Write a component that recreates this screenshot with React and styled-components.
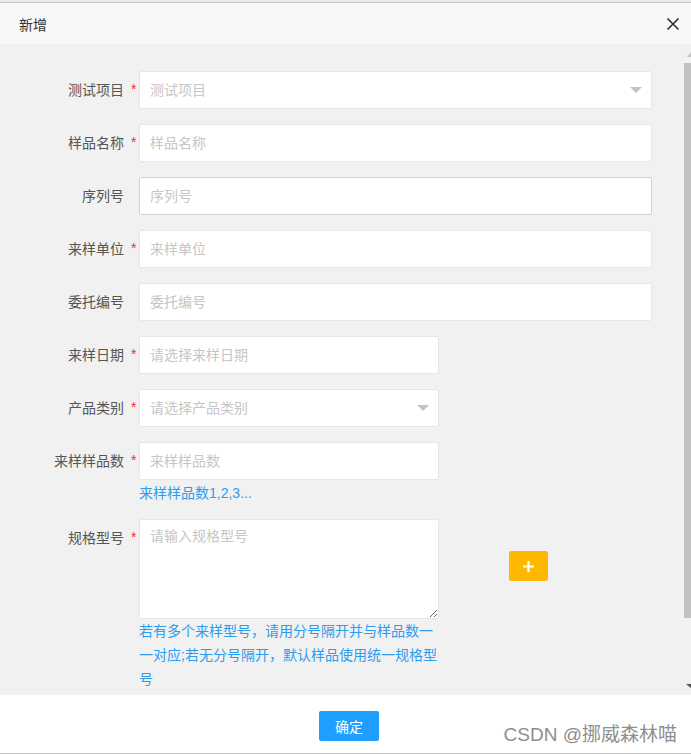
import React from "react";
import styled, { createGlobalStyle } from "styled-components";

const Global = createGlobalStyle`
  html, body { margin: 0; padding: 0; background: #ececec; }
  body { font-family: "Liberation Sans", "Noto Sans CJK SC", sans-serif; }
  * { box-sizing: border-box; }
`;

const Dialog = styled.div`
  width: 691px;
  height: 752px;
  margin-top: 2px;
  border-top: 1px solid #c6c6c6;
  border-bottom: 1px solid #c2c2c2;
  background: #fff;
  display: flex;
  flex-direction: column;
  overflow: hidden;
`;

const Header = styled.div`
  height: 42px;
  flex-shrink: 0;
  background: #f8f8f8;
  border-bottom: 1px solid #eeeeee;
  display: flex;
  align-items: center;
  justify-content: space-between;
  padding: 0 11px 0 19px;
`;

const Title = styled.div`
  font-size: 14px;
  color: #333;
`;

const CloseBtn = styled.button`
  border: none;
  background: none;
  padding: 0;
  width: 14px;
  height: 14px;
  display: flex;
  cursor: pointer;
`;

const Body = styled.div`
  height: 650px;
  flex-shrink: 0;
  background: #f1f1f1;
  display: flex;
  overflow: hidden;
`;

const Form = styled.form`
  flex: 1;
  padding-top: 26px;
  display: flex;
  flex-direction: column;
`;

const ScrollTrack = styled.div`
  width: 7px;
  flex-shrink: 0;
  display: flex;
  flex-direction: column;
  align-items: flex-end;
`;

const ArrowUp = styled.div`
  margin-top: 7px;
  width: 0;
  height: 0;
  border-left: 4px solid transparent;
  border-bottom: 5px solid #c4c4c4;
`;

const Thumb = styled.div`
  margin-top: 6px;
  width: 7px;
  height: 555px;
  background: #c1c1c1;
`;

const ArrowDown = styled.div`
  margin-top: 66px;
  width: 0;
  height: 0;
  border-left: 5px solid transparent;
  border-top: 4px solid #505050;
`;

const Row = styled.div`
  display: flex;
  align-items: flex-start;
  margin-bottom: ${(p) => (p.$mb != null ? p.$mb : 15)}px;
`;

const Label = styled.label`
  width: 124px;
  flex-shrink: 0;
  text-align: right;
  padding: 9px 0;
  font-size: 14px;
  line-height: 20px;
  color: #555;
  white-space: nowrap;
`;

const Star = styled.span`
  width: 15px;
  flex-shrink: 0;
  padding: 8px 0 0 7px;
  font-size: 14px;
  line-height: 20px;
  color: #ff2a2a;
`;

const Field = styled.div`
  display: flex;
  flex-direction: column;
  position: relative;
`;

const Input = styled.input`
  width: ${(p) => (p.$wide ? 513 : 300)}px;
  height: 38px;
  border: 1px solid ${(p) => (p.$strong ? "#d2d2d2" : "#e6e6e6")};
  border-radius: 2px;
  background: #fff;
  padding: 0 10px;
  font-size: 14px;
  font-family: inherit;
  color: #333;
  outline: none;
  &::placeholder { color: #c6c6c6; }
`;

const Caret = styled.span`
  position: absolute;
  right: 10px;
  top: 16px;
  width: 0;
  height: 0;
  border-left: 6px solid transparent;
  border-right: 6px solid transparent;
  border-top: 6px solid #c2c2c2;
  pointer-events: none;
`;

const Help = styled.div`
  width: 300px;
  font-size: 14px;
  line-height: ${(p) => p.$lh || 24}px;
  margin-top: ${(p) => p.$mt || 0}px;
  color: #2d9bf0;
`;

const TextArea = styled.textarea`
  width: 300px;
  height: 100px;
  border: 1px solid #e6e6e6;
  border-radius: 2px;
  background: #fff;
  padding: 6px 10px;
  font-size: 14px;
  line-height: 20px;
  font-family: inherit;
  resize: vertical;
  outline: none;
  display: block;
  &::placeholder { color: #c6c6c6; }
`;

const AddButton = styled.button`
  margin: 32px 0 0 70px;
  width: 39px;
  height: 30px;
  border: none;
  border-radius: 2px;
  background: #ffb800;
  display: flex;
  align-items: center;
  justify-content: center;
  cursor: pointer;
  padding: 0;
`;

const Footer = styled.div`
  height: 57px;
  flex-shrink: 0;
  background: #fff;
  position: relative;
  display: flex;
  justify-content: center;
  padding: 16px 0 0 7px;
`;

const PrimaryButton = styled.button`
  width: 60px;
  height: 30px;
  border: none;
  border-radius: 2px;
  background: #1e9fff;
  color: #fff;
  font-size: 14px;
  font-family: inherit;
  cursor: pointer;
  padding: 0;
`;

const Watermark = styled.div`
  position: absolute;
  right: 14px;
  top: 28px;
  font-size: 19px;
  line-height: 24px;
  color: #8e8e8e;
  text-shadow: 0 0 1px rgba(255, 255, 255, 0.8);
  white-space: nowrap;
  pointer-events: none;
`;

const fields = [
  { label: "测试项目", req: true, ph: "测试项目", wide: true, select: true },
  { label: "样品名称", req: true, ph: "样品名称", wide: true },
  { label: "序列号", req: false, ph: "序列号", wide: true, strong: true },
  { label: "来样单位", req: true, ph: "来样单位", wide: true },
  { label: "委托编号", req: false, ph: "委托编号", wide: true },
  { label: "来样日期", req: true, ph: "请选择来样日期" },
  { label: "产品类别", req: true, ph: "请选择产品类别", select: true },
];

export default function App() {
  return (
    <>
      <Global />
      <Dialog>
        <Header>
          <Title>新增</Title>
          <CloseBtn aria-label="关闭">
            <svg width="14" height="14" viewBox="0 0 14 14">
              <path d="M1.5 1.5 L12.5 12.5 M12.5 1.5 L1.5 12.5" stroke="#2b2b36" strokeWidth="1.6" fill="none" />
            </svg>
          </CloseBtn>
        </Header>
        <Body>
          <Form onSubmit={(e) => e.preventDefault()}>
            {fields.map((f) => (
              <Row key={f.label}>
                <Label>{f.label}</Label>
                <Star>{f.req ? "*" : ""}</Star>
                <Field>
                  <Input $wide={f.wide} $strong={f.strong} placeholder={f.ph} readOnly={f.select} />
                  {f.select && <Caret />}
                </Field>
              </Row>
            ))}
            <Row $mb={15}>
              <Label>来样样品数</Label>
              <Star>*</Star>
              <Field>
                <Input placeholder="来样样品数" />
                <Help $lh={22} $mt={2}>来样样品数1,2,3...</Help>
              </Field>
            </Row>
            <Row $mb={0}>
              <Label>规格型号</Label>
              <Star>*</Star>
              <Field>
                <TextArea placeholder="请输入规格型号" />
                <Help>若有多个来样型号，请用分号隔开并与样品数一一对应;若无分号隔开，默认样品使用统一规格型号</Help>
              </Field>
              <AddButton type="button" aria-label="添加">
                <svg width="13" height="13" viewBox="0 0 13 13">
                  <path d="M6.5 1 V12 M1 6.5 H12" stroke="#fff" strokeWidth="2.2" fill="none" />
                </svg>
              </AddButton>
            </Row>
          </Form>
          <ScrollTrack>
            <ArrowUp />
            <Thumb />
            <ArrowDown />
          </ScrollTrack>
        </Body>
        <Footer>
          <PrimaryButton type="button">确定</PrimaryButton>
          <Watermark>CSDN @挪威森林喵</Watermark>
        </Footer>
      </Dialog>
    </>
  );
}
